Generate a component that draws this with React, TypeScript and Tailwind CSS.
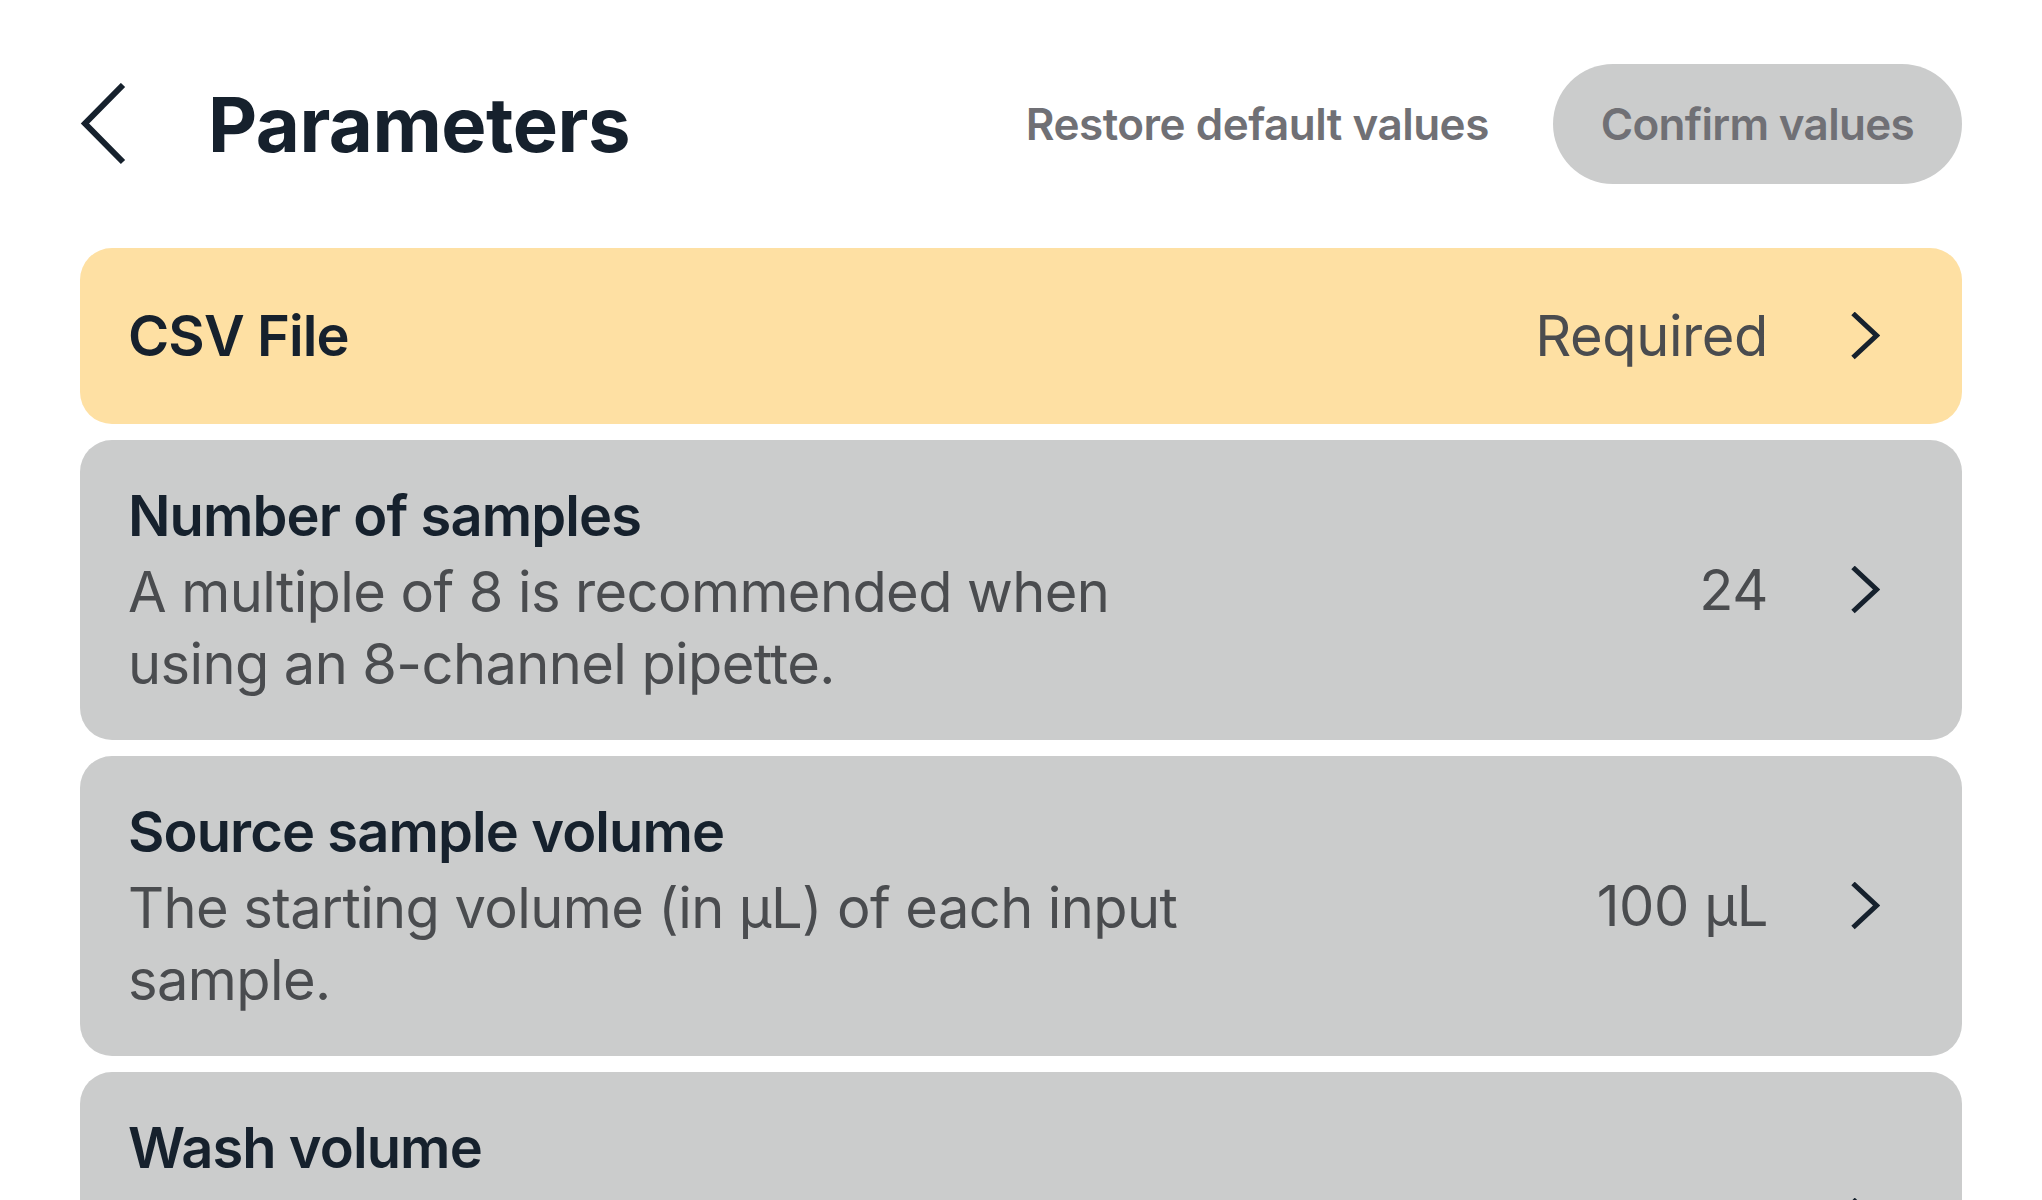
import React from "react";

function ChevronRight() {
  return (
    <svg width="30" height="48" viewBox="0 0 30 48" className="shrink-0" fill="none">
      <polyline points="3,1.5 26.5,23.5 3,45.5" stroke="#16212d" strokeWidth="5" strokeLinejoin="miter" />
    </svg>
  );
}

function ChevronLeft() {
  return (
    <svg width="46" height="82" viewBox="0 0 46 82" className="shrink-0" fill="none">
      <polyline points="43,2 5,40.5 43,79" stroke="#16212d" strokeWidth="6" strokeLinejoin="miter" />
    </svg>
  );
}

type Param = {
  title: string;
  description?: string;
  value: string;
  required?: boolean;
};

const params: Param[] = [
  { title: "CSV File", value: "Required", required: true },
  {
    title: "Number of samples",
    description: "A multiple of 8 is recommended when using an 8-channel pipette.",
    value: "24",
  },
  {
    title: "Source sample volume",
    description: "The starting volume (in µL) of each input sample.",
    value: "100 µL",
  },
  {
    title: "Wash volume",
    description: "The volume (in µL) of wash buffer used in each wash step.",
    value: "150 µL",
  },
];

function ParamCard({ p }: { p: Param }) {
  if (p.required) {
    return (
      <div className="flex h-[176px] items-center justify-between rounded-[32px] bg-[#fee0a3] pl-12 pr-[82px]">
        <div className="text-[56px] font-semibold leading-[72px] tracking-[-0.9px] text-[#16212d]">{p.title}</div>
        <div className="flex items-center gap-[82px]">
          <div className="text-[56px] font-normal leading-[72px] tracking-[-0.4px] text-[#4a4c4f]">{p.value}</div>
          <ChevronRight />
        </div>
      </div>
    );
  }
  return (
    <div className="flex h-[300px] shrink-0 items-center justify-between rounded-[32px] bg-[#cbcccc] pl-12 pr-[82px]">
      <div className="flex max-w-[1090px] flex-col gap-1">
        <div className="text-[56px] font-semibold leading-[72px] tracking-[-0.9px] text-[#16212d]">{p.title}</div>
        <div className="text-[56px] font-normal leading-[72px] tracking-[-0.6px] text-[#4a4c4f]">{p.description}</div>
      </div>
      <div className="flex items-center gap-[82px]">
        <div className="text-[56px] font-normal leading-[72px] tracking-[-0.4px] text-[#4a4c4f]">{p.value}</div>
        <ChevronRight />
      </div>
    </div>
  );
}

export default function App() {
  return (
    <div className="min-h-screen bg-white font-[Inter,sans-serif] antialiased">
      <div className="flex items-center justify-between px-20 pt-16">
        <div className="flex items-center gap-[82px]">
          <ChevronLeft />
          <div className="text-[76px] font-bold leading-[96px] tracking-[-0.5px] text-[#16212d]">Parameters</div>
        </div>
        <div className="flex items-center gap-16">
          <div className="text-[44px] font-semibold leading-[56px] tracking-[-0.5px] text-[#707075]">Restore default values</div>
          <div className="flex h-[120px] items-center rounded-full bg-[#cbcccc] px-12 text-[44px] font-semibold leading-[56px] tracking-[-0.7px] text-[#707075]">
            Confirm values
          </div>
        </div>
      </div>
      <div className="mt-16 flex flex-col gap-4 px-20">
        {params.map((p) => (
          <ParamCard key={p.title} p={p} />
        ))}
      </div>
    </div>
  );
}
